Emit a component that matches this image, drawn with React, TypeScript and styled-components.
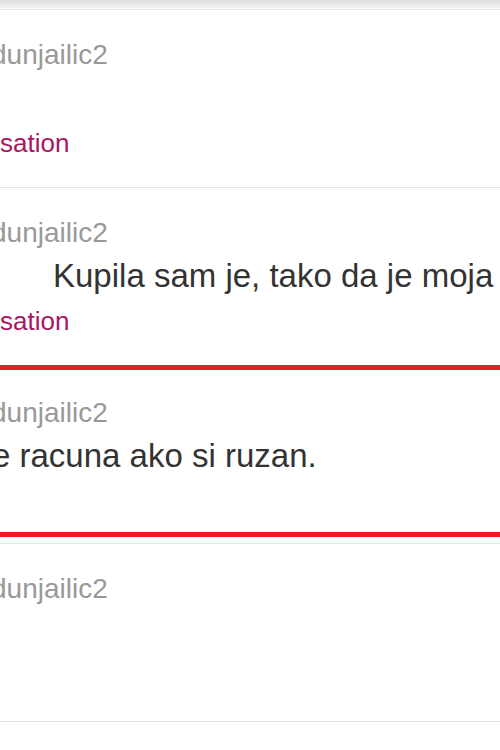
import * as React from 'react'
import styled, { createGlobalStyle } from 'styled-components'

const GlobalStyle = createGlobalStyle`
    html, body {
        margin: 0;
        padding: 0;
        background: #ffffff;
        overflow: hidden;
    }
    body {
        font-family: 'Liberation Sans', Arial, sans-serif;
    }
`

const S = {
    Page: styled.div`
        width: 500px;
        height: 750px;
        overflow: hidden;
        background: #ffffff;
    `,
    TopShade: styled.div`
        height: 8px;
        background: linear-gradient(#dedede, #f3f3f3);
        border-bottom: 1px solid #fafafa;
    `,
    List: styled.div`
        display: flex;
        flex-direction: column;
    `,
    Item: styled.div<{ $highlighted?: boolean }>`
        box-sizing: border-box;
        height: ${(p) => (p.$highlighted ? '172px' : '178px')};
        margin-bottom: ${(p) => (p.$highlighted ? '6px' : '0')};
        padding-top: ${(p) => (p.$highlighted ? '27px' : '29px')};
        border-top: ${(p) => (p.$highlighted ? '5px solid #ed1c24' : '1px solid #e4e4e4')};
        border-bottom: ${(p) => (p.$highlighted ? '5px solid #ed1c24' : 'none')};
        display: flex;
        flex-direction: column;
        overflow: hidden;
        white-space: nowrap;
    `,
    Username: styled.div<{ $indent: number }>`
        font-size: 28px;
        line-height: 32px;
        color: #999999;
        margin-left: ${(p) => p.$indent}px;
    `,
    Message: styled.div<{ $indent: number }>`
        height: 38px;
        margin-top: 8px;
        font-size: 33px;
        line-height: 38px;
        color: #333333;
        margin-left: ${(p) => p.$indent}px;
    `,
    Link: styled.a`
        margin-top: 11px;
        font-size: 26px;
        line-height: 30px;
        color: #a8175f;
        text-decoration: none;
    `,
}

type Entry = {
    user: string
    text?: string
    indent?: number
    link?: boolean
    highlighted?: boolean
}

const entries: Entry[] = [
    { user: 'dunjailic2', text: '', link: true },
    { user: 'dunjailic2', text: 'Kupila sam je, tako da je moja', indent: 53, link: true },
    { user: 'dunjailic2', text: 'e racuna ako si ruzan.', indent: -8, highlighted: true },
    { user: 'dunjailic2' },
    { user: '' },
]

export default function App() {
    return (
        <S.Page>
            <GlobalStyle />
            <S.TopShade />
            <S.List>
                {entries.map((e, i) => (
                    <S.Item key={i} $highlighted={e.highlighted}>
                        {e.user && <S.Username $indent={-9}>{e.user}</S.Username>}
                        {e.text !== undefined && <S.Message $indent={e.indent ?? 0}>{e.text}</S.Message>}
                        {e.link && <S.Link href="#">sation</S.Link>}
                    </S.Item>
                ))}
            </S.List>
        </S.Page>
    )
}
